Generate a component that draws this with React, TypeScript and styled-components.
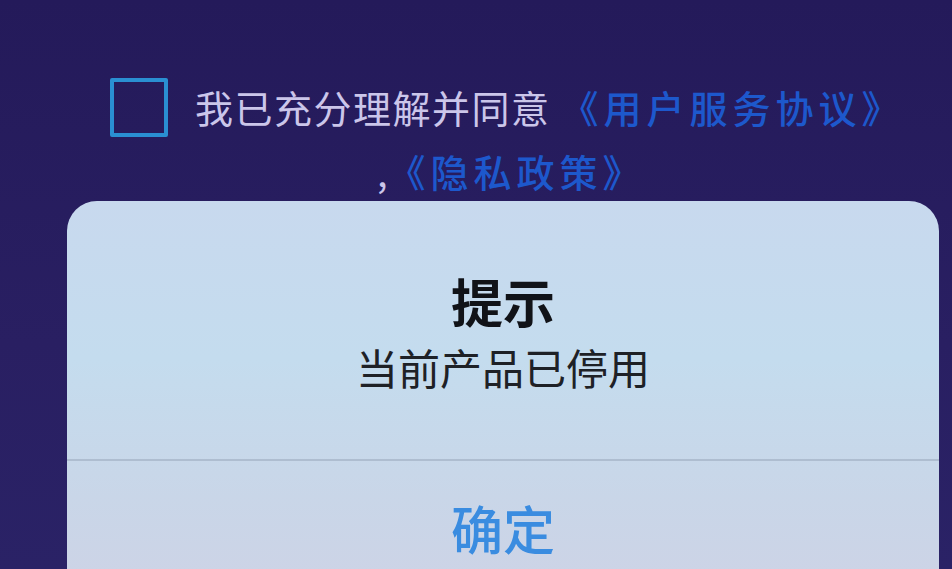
import styled, { createGlobalStyle } from 'styled-components'

const GlobalStyle = createGlobalStyle`
  html, body {
    margin: 0;
    padding: 0;
    background: #271d5e;
  }
  body {
    font-family: "Noto Sans CJK SC", "Noto Sans", sans-serif;
  }
`

const Page = styled.div`
  width: 952px;
  height: 569px;
  overflow: hidden;
  background: linear-gradient(180deg, #241a5a 0%, #291f62 60%, #2a2266 100%);
  display: flex;
  flex-direction: column;
`

const Agreement = styled.div`
  padding-top: 78px;
  display: flex;
  flex-direction: column;
  gap: 9px;
`

const AgreeRow = styled.div`
  display: flex;
  align-items: center;
  padding-left: 110px;
  height: 58px;
`

const Checkbox = styled.span`
  box-sizing: border-box;
  width: 58px;
  height: 59px;
  border: 4px solid #2a8fd2;
  border-radius: 2px;
  margin-right: 27px;
  flex-shrink: 0;
`

const AgreeText = styled.span`
  font-size: 38px;
  line-height: 58px;
  letter-spacing: 1.5px;
  color: #cbc6ea;
  white-space: nowrap;
`

const Link = styled.span`
  color: #1d58cc;
  font-weight: 500;
  letter-spacing: 5px;
`

const SecondLine = styled.div`
  padding-left: 377px;
  font-size: 38px;
  line-height: 52px;
  color: #cbc6ea;
  white-space: nowrap;
`

const Dialog = styled.div`
  margin: 4px 0 0 67px;
  width: 872px;
  flex: 1;
  border-radius: 30px 30px 0 0;
  background: linear-gradient(180deg, #c8d9ee 0%, #c4dcee 40%, #c9d6e8 75%, #cdd3e6 100%);
  display: flex;
  flex-direction: column;
`

const DialogBody = styled.div`
  padding: 72px 0 68px;
  display: flex;
  flex-direction: column;
  align-items: center;
  gap: 14px;
  border-bottom: 2px solid #aebdd0;
`

const Title = styled.div`
  font-size: 52px;
  line-height: 56px;
  font-weight: 700;
  color: #111318;
`

const Message = styled.div`
  font-size: 42px;
  line-height: 48px;
  color: #1e2126;
`

const ConfirmButton = styled.div`
  height: 134px;
  display: flex;
  align-items: center;
  justify-content: center;
  font-size: 52px;
  line-height: 60px;
  font-weight: 500;
  color: #3a8ce0;
`

export default function App() {
  return (
    <>
      <GlobalStyle />
      <Page>
        <Agreement>
          <AgreeRow>
            <Checkbox />
            <AgreeText>
              我已充分理解并同意 <Link>《用户服务协议》</Link>
            </AgreeText>
          </AgreeRow>
          <SecondLine>
            ,<Link>《隐私政策》</Link>
          </SecondLine>
        </Agreement>
        <Dialog>
          <DialogBody>
            <Title>提示</Title>
            <Message>当前产品已停用</Message>
          </DialogBody>
          <ConfirmButton>确定</ConfirmButton>
        </Dialog>
      </Page>
    </>
  )
}
